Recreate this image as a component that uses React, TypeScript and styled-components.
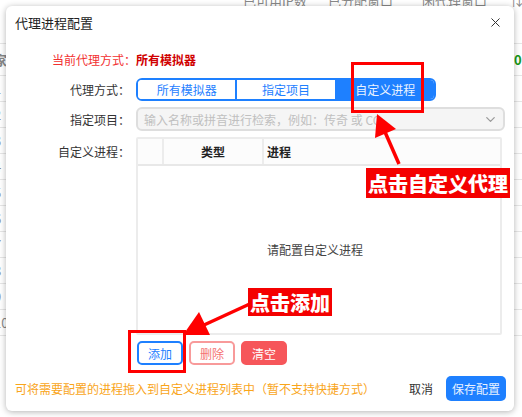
import React from "react";
import styled, { createGlobalStyle } from "styled-components";
import { X, ChevronDown } from "lucide-react";

const GlobalStyle = createGlobalStyle`
  html, body {
    margin: 0;
    padding: 0;
    background: #fff;
    font-family: "Noto Sans CJK SC", "Noto Sans", sans-serif;
    font-size: 12px;
    color: #333;
  }
`;

const Page = styled.div`
  position: relative;
  width: 522px;
  height: 417px;
  overflow: hidden;
  background: #fff;
`;

/* ---------- page behind the dialog ---------- */
const BgHead = styled.div`
  height: 43px;
  display: flex;
  align-items: flex-start;
  border-bottom: 1px solid #e6e6e6;
  color: #888;
  font-size: 13px;
`;

const BgHeadCell = styled.div<{ $w: number }>`
  width: ${(p) => p.$w}px;
  flex-shrink: 0;
  margin-top: -9px;
  white-space: nowrap;
`;

const BgRow = styled.div<{ $h: number; $bold?: boolean }>`
  height: ${(p) => p.$h}px;
  display: flex;
  align-items: center;
  border-bottom: 1px solid #e6e6e6;
  font-size: 13px;
  color: #888;
  font-weight: ${(p) => (p.$bold ? 700 : 400)};
`;

const BgIndex = styled.div`
  width: 12px;
  margin-left: -6px;
  flex-shrink: 0;
`;

const BgStatus = styled.div`
  margin-left: auto;
  margin-right: -4px;
  color: #1a9a1a;
  font-weight: 700;
`;

/* ---------- dialog ---------- */
const Dialog = styled.div`
  position: absolute;
  left: 6px;
  top: 6px;
  width: 508px;
  height: 405px;
  background: #fff;
  border-radius: 6px;
  box-shadow: 0 1px 6px rgba(0, 0, 0, 0.3);
  display: flex;
  flex-direction: column;
`;

const Header = styled.div`
  height: 32px;
  padding: 0 9px;
  display: flex;
  align-items: center;
  justify-content: space-between;
  font-size: 13px;
  color: #222;
`;

const CloseBtn = styled.span`
  display: flex;
  color: #333;
  margin-right: 2px;
`;

const Body = styled.div`
  padding: 10px 9px 0 9px;
  display: grid;
  grid-template-columns: 115px 1fr;
  column-gap: 6px;
  row-gap: 6px;
  align-items: center;
`;

const Label = styled.div`
  text-align: right;
  color: #333;
  white-space: nowrap;
`;

const TopLabel = styled(Label)`
  align-self: start;
  padding-top: 6px;
`;

const Current = styled.div`
  grid-column: 1 / 3;
  height: 22px;
  margin-bottom: 2px;
  padding-left: 37px;
  display: flex;
  align-items: center;
  color: #f23030;
`;

const CurrentValue = styled.b`
  color: #d00000;
  font-weight: 700;
`;

const Segments = styled.div`
  display: flex;
  width: 300px;
  height: 23px;
  box-sizing: border-box;
  border: 2px solid #1e80ff;
  border-radius: 6px;
  overflow: hidden;
`;

const Segment = styled.div<{ $active?: boolean }>`
  flex: 1;
  display: flex;
  align-items: center;
  justify-content: center;
  color: ${(p) => (p.$active ? "#eaf3ff" : "#1e80ff")};
  background: ${(p) => (p.$active ? "#1e80ff" : "#fff")};
  & + & {
    border-left: 2px solid #1e80ff;
  }
`;

const Select = styled.div`
  height: 24px;
  box-sizing: border-box;
  border: 2px solid #dedede;
  border-radius: 6px;
  background: #f5f5f5;
  display: flex;
  align-items: center;
  justify-content: space-between;
  padding: 0 5px 0 6px;
  color: #c0c0c0;
`;

const Table = styled.div`
  height: 198px;
  margin-right: 3px;
  box-sizing: border-box;
  border: 2px solid #ececec;
  border-radius: 2px;
  display: flex;
  flex-direction: column;
`;

const THead = styled.div`
  height: 25px;
  display: grid;
  grid-template-columns: 24px 100px 1fr;
  border-bottom: 2px solid #e8e8e8;
  background: #fcfcfc;
  font-weight: 700;
  color: #222;
`;

const TH = styled.div<{ $align?: string }>`
  display: flex;
  align-items: center;
  justify-content: ${(p) => p.$align || "center"};
  padding-left: ${(p) => (p.$align ? "3px" : "0")};
  & + & {
    border-left: 2px solid #ececec;
  }
`;

const Empty = styled.div`
  flex: 1;
  display: flex;
  align-items: center;
  justify-content: center;
  color: #444;
  padding-right: 8px;
`;

const Actions = styled.div`
  grid-column: 2;
  display: flex;
  gap: 6px;
  padding-left: 1px;
`;

const Btn = styled.button<{ $kind: "blue" | "redLine" | "red" }>`
  height: 24px;
  padding: 0 9px;
  box-sizing: border-box;
  border-radius: 5px;
  font-family: inherit;
  font-size: 12px;
  border: 2px solid
    ${(p) => (p.$kind === "blue" ? "#1e80ff" : p.$kind === "redLine" ? "#f89a9a" : "#f6565a")};
  background: ${(p) => (p.$kind === "red" ? "#f6565a" : "#fff")};
  color: ${(p) => (p.$kind === "blue" ? "#1e80ff" : p.$kind === "redLine" ? "#f57272" : "#fff")};
`;

const Footer = styled.div`
  margin-top: 11px;
  padding: 0 8px 0 9px;
  height: 25px;
  display: flex;
  align-items: center;
  justify-content: space-between;
`;

const Hint = styled.div`
  color: #f9a51a;
  white-space: nowrap;
`;

const FooterRight = styled.div`
  display: flex;
  align-items: center;
  gap: 13px;
`;

const Cancel = styled.span`
  color: #333;
`;

const Save = styled.button`
  height: 25px;
  width: 60px;
  border: none;
  border-radius: 5px;
  background: #1e80ff;
  color: #e8f1ff;
  font-family: inherit;
  font-size: 12px;
  padding: 0;
`;

/* ---------- tutorial annotations on top ---------- */
const Mark = styled.div<{ $x: number; $y: number; $w: number; $h: number }>`
  position: absolute;
  left: ${(p) => p.$x}px;
  top: ${(p) => p.$y}px;
  width: ${(p) => p.$w}px;
  height: ${(p) => p.$h}px;
  box-sizing: border-box;
  border: 3px solid #f00;
`;

const Tag = styled.div<{ $x: number; $y: number; $h: number }>`
  position: absolute;
  left: ${(p) => p.$x}px;
  top: ${(p) => p.$y}px;
  height: ${(p) => p.$h}px;
  padding: 0 2px;
  background: #f40000;
  color: #fff;
  font-size: 20px;
  font-weight: 900;
  display: flex;
  align-items: center;
  white-space: nowrap;
`;

const Arrows = styled.svg`
  position: absolute;
  left: 0;
  top: 0;
`;

const bgRows = ["1", "2", "3", "4", "5", "6", "7", "8", "9", "10"];

export default function App() {
  return (
    <Page>
      <GlobalStyle />
      <BgHead>
        <BgHeadCell $w={243} />
        <BgHeadCell $w={85}>已可用IP数</BgHeadCell>
        <BgHeadCell $w={94}>已分配窗口</BgHeadCell>
        <BgHeadCell $w={88}>闲代理窗口</BgHeadCell>
        <BgHeadCell $w={12}>⇅</BgHeadCell>
      </BgHead>
      <BgRow $h={31} $bold>
        <BgIndex>家</BgIndex>
        <BgStatus>0.</BgStatus>
      </BgRow>
      {bgRows.map((n) => (
        <BgRow key={n} $h={25}>
          <BgIndex>{n}</BgIndex>
        </BgRow>
      ))}

      <Dialog>
        <Header>
          <span>代理进程配置</span>
          <CloseBtn>
            <X size={15} strokeWidth={1.6} />
          </CloseBtn>
        </Header>
        <Body>
          <Current>
            当前代理方式：<CurrentValue>所有模拟器</CurrentValue>
          </Current>

          <Label>代理方式：</Label>
          <Segments>
            <Segment>所有模拟器</Segment>
            <Segment>指定项目</Segment>
            <Segment $active>自定义进程</Segment>
          </Segments>

          <Label>指定项目：</Label>
          <Select>
            <span>输入名称或拼音进行检索，例如：传奇 或 CQ</span>
            <ChevronDown size={15} color="#9a9a9a" />
          </Select>

          <TopLabel>自定义进程：</TopLabel>
          <Table>
            <THead>
              <TH />
              <TH>类型</TH>
              <TH $align="flex-start">进程</TH>
            </THead>
            <Empty>请配置自定义进程</Empty>
          </Table>

          <Actions>
            <Btn $kind="blue">添加</Btn>
            <Btn $kind="redLine">删除</Btn>
            <Btn $kind="red">清空</Btn>
          </Actions>
        </Body>
        <Footer>
          <Hint>可将需要配置的进程拖入到自定义进程列表中（暂不支持快捷方式）</Hint>
          <FooterRight>
            <Cancel>取消</Cancel>
            <Save>保存配置</Save>
          </FooterRight>
        </Footer>
      </Dialog>

      <Mark $x={351} $y={62} $w={73} $h={51} />
      <Mark $x={128} $y={330} $w={58} $h={43} />
      <Arrows width="522" height="417" viewBox="0 0 522 417">
        <line x1="399" y1="164" x2="385" y2="132" stroke="#f00" strokeWidth="3.5" />
        <polygon points="377,114 396,129 375,138" fill="#f00" />
        <line x1="254" y1="302" x2="204" y2="325" stroke="#f00" strokeWidth="3.5" />
        <polygon points="183,335 199,312 210,335" fill="#f00" />
      </Arrows>
      <Tag $x={366} $y={168} $h={30}>点击自定义代理</Tag>
      <Tag $x={248} $y={288} $h={28}>点击添加</Tag>
    </Page>
  );
}
